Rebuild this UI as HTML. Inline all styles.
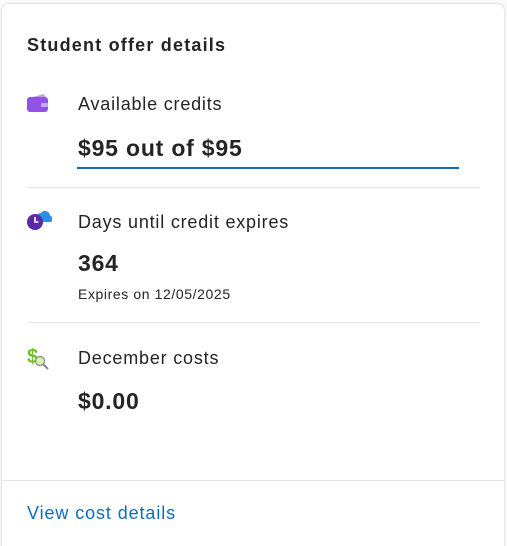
<!DOCTYPE html>
<html><head><meta charset="utf-8"><style>
*{margin:0;padding:0;box-sizing:border-box}
html,body{width:507px;height:546px;overflow:hidden}
body{background:#fafafa;font-family:"Liberation Sans",sans-serif;color:#242424;position:relative}
.card{position:absolute;left:1px;top:3px;width:504px;height:560px;background:#fff;border:1px solid #e6e6e6;border-radius:8px;box-shadow:0 0 2px rgba(0,0,0,.08)}
.abs{position:absolute;white-space:nowrap}
.h{left:27px;top:35px;font-size:18px;font-weight:bold;letter-spacing:1.2px}
.lbl{left:78px;font-size:18px;letter-spacing:0.8px}
.big{left:78px;font-size:23px;font-weight:bold;letter-spacing:0.8px}
.hr{position:absolute;left:27px;width:453px;height:1px;background:#e6e6e6}
.ic{position:absolute;left:26px}
</style></head><body>
<div class="card"></div>
<div class="abs h">Student offer details</div>

<svg class="ic" style="top:93px" width="24" height="22" viewBox="0 0 24 22"><path d="M3 5 L18 1 L20 5Z" fill="#c39bf5"/><rect x="1" y="4" width="21" height="15" rx="3" fill="#9152e8"/><rect x="15" y="10" width="7" height="4" rx="1" fill="#c9a6f7"/></svg>
<div class="abs lbl" style="top:94px">Available credits</div>
<div class="abs big" style="top:135px">$95 out of $95</div>
<div class="hr" style="top:167px;left:77px;width:382px;height:2px;background:#0f6cbd"></div>
<div class="hr" style="top:187px"></div>

<svg class="ic" style="top:207px" width="26" height="24" viewBox="0 0 26 24"><path d="M10 12 a5 5 0 0 1 5-6 a5 5 0 0 1 9 3 a3 3 0 0 1 0 6 h-12z" fill="#2c8ee6"/><circle cx="9" cy="15" r="8" fill="#5b2aa8"/><path d="M9 10v5h3.5" stroke="#fff" stroke-width="1.6" fill="none"/></svg>
<div class="abs lbl" style="top:212px">Days until credit expires</div>
<div class="abs big" style="top:250px">364</div>
<div class="abs" style="left:78px;top:286px;font-size:14px;letter-spacing:0.6px">Expires on 12/05/2025</div>
<div class="hr" style="top:322px"></div>

<svg class="ic" style="top:344px" width="26" height="26" viewBox="0 0 26 26"><text x="1" y="19" font-size="20" font-weight="bold" fill="#6cc024" font-family="Liberation Sans">$</text><circle cx="14" cy="17" r="4.5" fill="#d8f5b0" stroke="#999" stroke-width="1.5"/><path d="M17 20l5 5" stroke="#888" stroke-width="2"/></svg>
<div class="abs lbl" style="top:348px">December costs</div>
<div class="abs big" style="top:388px">$0.00</div>

<div class="hr" style="top:480px;left:2px;width:502px"></div>
<div class="abs" style="left:27px;top:503px;font-size:18px;color:#0f6cbd;letter-spacing:0.9px">View cost details</div>
</body></html>
